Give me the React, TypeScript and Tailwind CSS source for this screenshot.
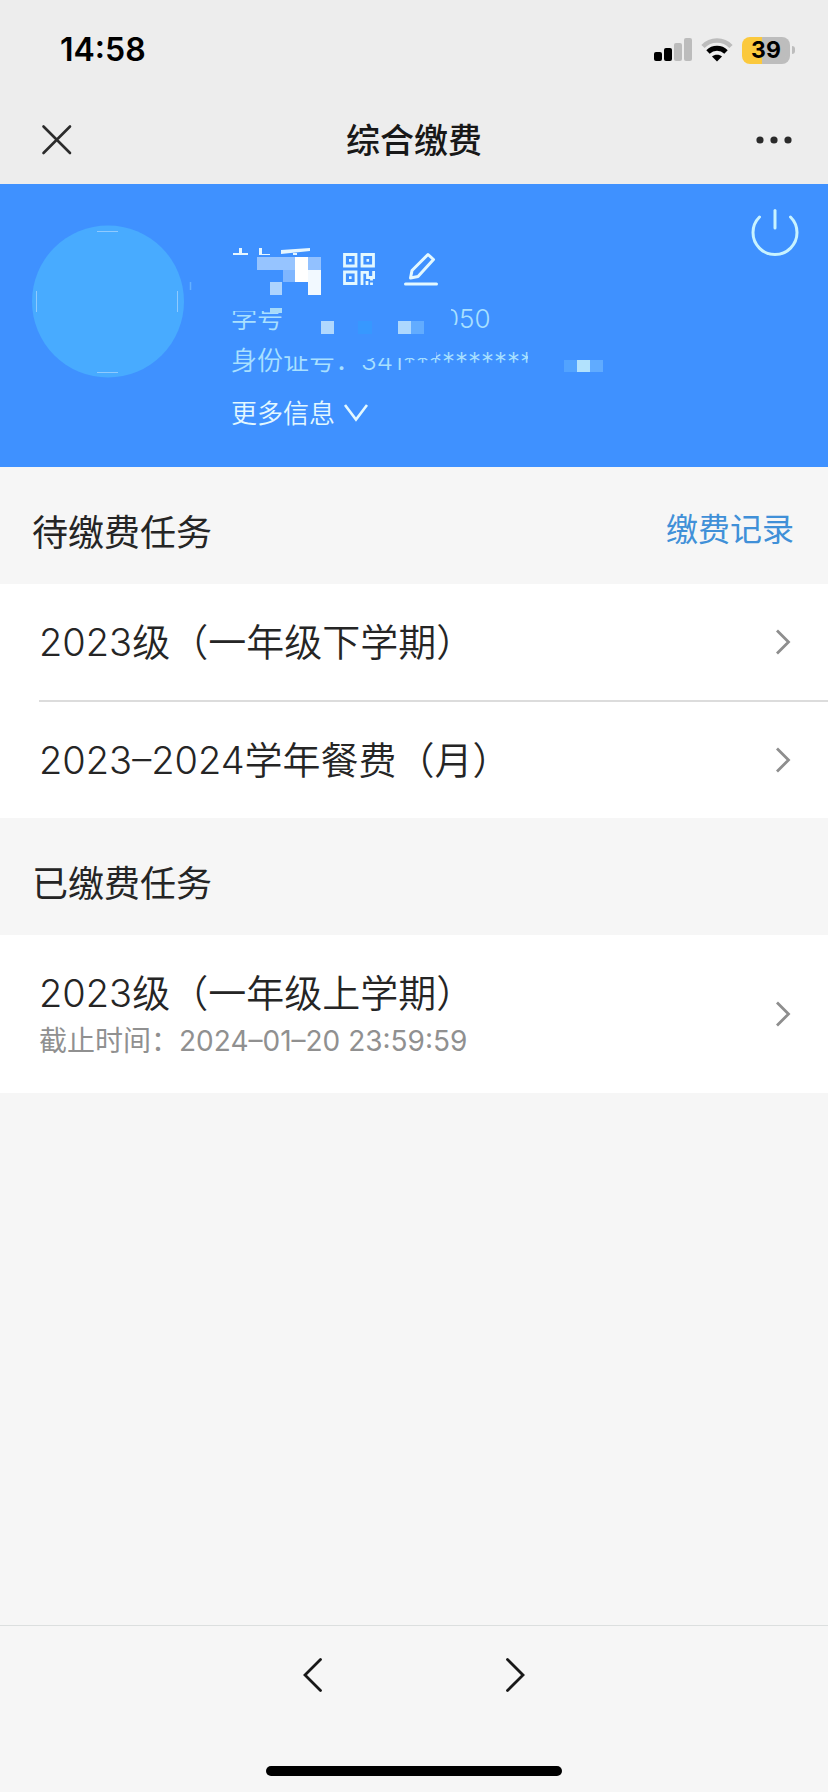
import type { ReactNode } from 'react';

type Task = {
  id: string;
  title: string;
  deadline?: string;
};

const pendingTasks: Task[] = [
  { id: 'term-2', title: '2023级（一年级下学期）' },
  { id: 'meals', title: '2023–2024学年餐费（月）' },
];

const paidTasks: Task[] = [
  { id: 'term-1', title: '2023级（一年级上学期）', deadline: '2024–01–20 23:59:59' },
];

function StatusBar() {
  return (
    <div className="flex h-[98px] items-center justify-between pt-0.5 pl-[60px] pr-[33px]">
      <span className="text-[32px] leading-10 font-semibold text-black">14:58</span>
      <div className="flex items-center gap-[9px]">
        <svg width="38" height="24" viewBox="0 0 38 24" aria-hidden="true">
          <rect x="0" y="14" width="8" height="9" rx="2" fill="#000" />
          <rect x="10" y="10" width="8" height="13" rx="2" fill="#000" />
          <rect x="20" y="5" width="8" height="18" rx="2" fill="#bcbcbc" />
          <rect x="30" y="0" width="8" height="23" rx="2" fill="#bcbcbc" />
        </svg>
        <svg width="32" height="24" viewBox="0 0 32 24" fill="none" aria-hidden="true">
          <path d="M2 8.5C9.5 0.5 22.5 0.5 30 8.5" stroke="#bcbcbc" strokeWidth="4.5" />
          <path d="M7 14C12 9 20 9 25 14" stroke="#000" strokeWidth="4.8" />
          <path d="M11 18.5C13.5 16 18.5 16 21 18.5L16 23.5Z" fill="#000" />
        </svg>
        <div className="flex items-center gap-0.5">
          <div className="flex h-[27px] w-12 items-center justify-center rounded-lg bg-linear-to-r from-[#fbc93d] from-42% to-[#bdbdbd] to-42% text-[23px] leading-none font-bold text-black">
            39
          </div>
          <span className="h-2 w-[3px] rounded-r-full bg-[#bdbdbd]" />
        </div>
      </div>
    </div>
  );
}

function TitleBar() {
  return (
    <div className="flex h-[86px] items-center justify-between pr-9 pl-10">
      <button type="button" aria-label="关闭" className="w-8">
        <svg width="34" height="34" viewBox="0 0 34 34" fill="none" stroke="#2b2b2b" strokeWidth="2.6" strokeLinecap="round">
          <path d="M3.500 2.500L30 29M30 2.500L3.500 29" />
        </svg>
      </button>
      <h1 className="text-[34px] leading-[48px] font-medium text-[#181818]">综合缴费</h1>
      <button type="button" aria-label="更多" className="flex w-9 justify-end pb-0.5">
        <svg width="36" height="8" viewBox="0 0 36 8" fill="#2b2b2b">
          <circle cx="4" cy="4" r="3.600" />
          <circle cx="18" cy="4" r="3.600" />
          <circle cx="32" cy="4" r="3.600" />
        </svg>
      </button>
    </div>
  );
}

function Avatar() {
  return (
    <svg width="160" height="153" viewBox="0 0 160 153" className="shrink-0" aria-hidden="true">
      <circle cx="76" cy="76.500" r="76" fill="#48abff" />
      <g stroke="#8fcaff" strokeWidth="1">
        <path d="M65 6.500H86M65 147.500H86M4.500 66V87M145.500 66V87" />
      </g>
      <path d="M158.500 57V65" stroke="#64b0ff" strokeWidth="1.500" />
    </svg>
  );
}

// mosaic over the personal details
function PrivacyMask() {
  return (
    <svg
      width="380"
      height="140"
      viewBox="0 0 380 140"
      className="pointer-events-none absolute top-0 left-0"
      aria-hidden="true"
    >
      <g fill="#3f91ff">
        <rect x="0" y="56" width="55" height="13" />
        <rect x="208" y="58" width="12" height="34" />
        <rect x="220" y="83" width="8" height="9" />
        <rect x="50" y="98" width="34" height="16" />
        <rect x="84" y="98" width="121" height="18" />
        <rect x="297" y="98" width="30" height="30" />
      </g>
      <g fill="#e6f6ff">
        <path d="M2 11H17V13H2ZM8 6H11V11H8ZM28 6H31V12H39V13H28ZM50 8L79 6V9L50 12ZM62 9H66V13H62Z" />
      </g>
      <path d="M26 15H64V40H52V28H26Z" fill="#96c4ff" />
      <rect x="52" y="28" width="12" height="12" fill="#7fb6ff" />
      <rect x="64" y="15" width="13" height="25" fill="#ffffff" />
      <rect x="77" y="15" width="13" height="13" fill="#92c1ff" />
      <rect x="77" y="28" width="13" height="25" fill="#f2f9ff" />
      <rect x="39" y="40" width="12" height="13" fill="#add4fe" />
      <rect x="39" y="66" width="12" height="5" fill="#a6dafa" />
      <rect x="90" y="79" width="13" height="13" fill="#b0d8fe" />
      <rect x="127" y="79" width="14" height="13" fill="#3798ff" />
      <rect x="167" y="79" width="13" height="13" fill="#add8fe" />
      <rect x="180" y="79" width="13" height="13" fill="#62acff" />
      <rect x="333" y="118" width="13" height="12" fill="#52a3ff" />
      <rect x="346" y="118" width="13" height="12" fill="#b2e2fd" />
      <rect x="359" y="118" width="13" height="12" fill="#60abff" />
    </svg>
  );
}

function Profile() {
  return (
    <section className="flex items-start bg-[#3f91ff] pr-7 pl-8 text-[#e3f8ff]">
      <div className="pt-[41px]">
        <Avatar />
      </div>
      <div className="relative mt-[58px] ml-[39px] flex-1 pb-[21px] text-[26px] font-[350]">
        <div className="flex h-[54px] items-center gap-[29px] pl-28">
          <button type="button" aria-label="二维码">
            <svg width="32" height="32" viewBox="0 0 32 32" fill="none" stroke="#e3f8ff" strokeWidth="2.800">
              <path d="M1.500 1.500H13V13H1.500ZM19 1.500H30.500V13H19ZM1.500 19H13V30.500H1.500Z" />
              <path d="M6 7.300H8.600M23.500 7.300H26.100M6 24.700H8.600" />
              <path d="M19 32V19.400H24.500V24.500H30.600V18M24 28V32M28.500 26V27.500M28.500 29.500V32" />
            </svg>
          </button>
          <button type="button" aria-label="编辑">
            <svg width="34" height="34" viewBox="0 0 34 34" fill="none" stroke="#e3f8ff" strokeWidth="3" strokeLinejoin="round">
              <path d="M24 2.500L29.500 7.500L14 24.500L6.500 26L8 18.500Z" />
              <path d="M1.500 32H32.500" strokeLinecap="round" />
            </svg>
          </button>
        </div>
        <div className="flex h-11 items-center text-[#a9e0ff]">
          <span className="w-[212px]">学号</span>
          <span>050</span>
        </div>
        <div className="flex h-10 items-center text-[#a9e0ff]">
          <span>身份证号：341</span>
          <span className="pt-0.5">***********</span>
        </div>
        <PrivacyMask />
        <button type="button" className="flex h-[66px] items-center gap-2">
          更多信息
          <svg width="26" height="20" viewBox="0 0 26 20" fill="none" stroke="#e3f8ff" strokeWidth="2.600">
            <path d="M2 2L13 16.500L24 2" />
          </svg>
        </button>
      </div>
      <button type="button" aria-label="退出" className="pt-6">
        <svg width="50" height="50" viewBox="0 0 50 50" fill="none" stroke="#c8f3ff" strokeWidth="3" strokeLinecap="round">
          <path d="M25 2.500V20" />
          <path d="M9.500 9A22 22 0 1 0 40.500 9" />
        </svg>
      </button>
    </section>
  );
}

function SectionHeader({ title, children }: { title: string; children?: ReactNode }) {
  return (
    <div className="flex h-[117px] items-center justify-between pr-[34px] pl-8">
      <h2 className="pt-3.5 text-[36px] leading-[48px] text-[#252525]">{title}</h2>
      {children}
    </div>
  );
}

function TaskList({ tasks }: { tasks: Task[] }) {
  return (
    <ul className="divide-y-2 divide-[#dcdcdc] bg-white pl-[39px]">
      {tasks.map((task) => (
        <li key={task.id}>
          <a href={`#${task.id}`} className="flex items-center justify-between py-[33px] pr-[37px]">
            <div>
              <p className="text-[38px] leading-[50px] font-[350] text-[#252525]">{task.title}</p>
              {task.deadline && (
                <p className="pt-1 text-[28px] leading-[38px] text-[#909090]">截止时间：{task.deadline}</p>
              )}
            </div>
            <svg width="16" height="26" viewBox="0 0 16 26" fill="none" stroke="#8e8e8e" strokeWidth="2.800" aria-hidden="true">
              <path d="M2 1.500L13.500 13L2 24.500" />
            </svg>
          </a>
        </li>
      ))}
    </ul>
  );
}

function BottomBar() {
  return (
    <footer className="mt-auto flex flex-col items-center border-t border-[#dcdfdf] bg-[#f6f6f6] pb-4">
      <nav className="flex h-[98px] items-center gap-[182px]">
        <button type="button" aria-label="后退">
          <svg width="20" height="34" viewBox="0 0 20 34" fill="none" stroke="#181818" strokeWidth="2.800" strokeLinecap="round">
            <path d="M17.500 1.500L2 17L17.500 32.500" />
          </svg>
        </button>
        <button type="button" aria-label="前进">
          <svg width="20" height="34" viewBox="0 0 20 34" fill="none" stroke="#181818" strokeWidth="2.800" strokeLinecap="round">
            <path d="M2.500 1.500L18 17L2.500 32.500" />
          </svg>
        </button>
      </nav>
      <div className="mt-[42px] h-2.5 w-[296px] rounded-full bg-black" />
    </footer>
  );
}

export default function App() {
  return (
    <div className="flex min-h-screen flex-col bg-[#f6f6f6] font-['Inter','Noto_Sans_CJK_SC',sans-serif]">
      <header className="bg-[#ededed]">
        <StatusBar />
        <TitleBar />
      </header>
      <main>
        <Profile />
        <SectionHeader title="待缴费任务">
          <a href="#records" className="pt-2 text-[32px] leading-[48px] text-[#4090d8]">
            缴费记录
          </a>
        </SectionHeader>
        <TaskList tasks={pendingTasks} />
        <SectionHeader title="已缴费任务" />
        <TaskList tasks={paidTasks} />
      </main>
      <BottomBar />
    </div>
  );
}
